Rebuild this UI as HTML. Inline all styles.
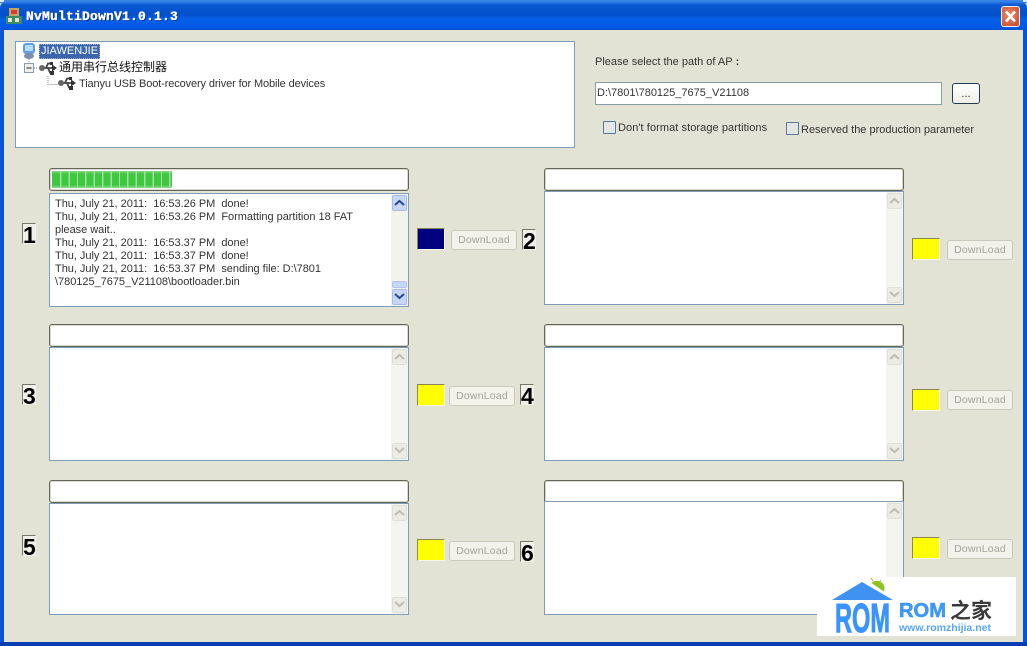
<!DOCTYPE html>
<html><head><meta charset="utf-8"><style>
html,body{margin:0;padding:0;background:#e3e3d5}
#r{position:relative;width:1027px;height:646px;overflow:hidden;background:#e3e3d5;font-family:"Liberation Sans","Noto Sans CJK SC",sans-serif;font-size:11px;color:#333}
#r div,#r span.a,#r svg{position:absolute;box-sizing:border-box}
.t{white-space:pre;line-height:13px}
.pg{background:#fff;border:1px solid #66655a;border-radius:3px;box-shadow:inset 0 0 0 1px #d8d8d0;height:23px;width:360px}
.bx{background:#fff;border:1px solid #7f9db9;width:360px}
.sb{right:0;top:0;bottom:0;width:17px;background:#f4f4f0}
.ar{left:1px;width:15px;height:16px;background:#ecebe5;border:1px solid #dfdfd8;border-radius:2px}
.n{border:1px solid #77776a;border-right-color:#f2f2e8;border-bottom-color:#f2f2e8;width:14px;height:21px;font:bold 23px/23px "Liberation Sans",sans-serif;color:#000;text-align:center;background:#f0f0e8}
.c{width:28px;height:22px;background:#ff0;border:1px solid #8a8a50;border-right-color:#f8f8e8;border-bottom-color:#f8f8e8}
.b{width:66px;height:20px;background:#f2f1ea;border:1px solid #cac9bc;border-radius:3px;color:#a5a497;text-align:center;font-size:10.5px;line-height:18px;letter-spacing:.2px}
.cb{width:13px;height:13px;background:#e4e6e6;border:1px solid #5a7a9a;border-radius:1px}
</style></head><body><div id="r">

<div style="left:0;top:0;width:1027px;height:3px;background:#3a85e8"></div>
<div style="left:0;top:0;width:4px;height:2px;background:#dfe8f4"></div>
<div style="left:1023px;top:0;width:4px;height:2px;background:#dfe8f4"></div>
<div style="left:0;top:1px;width:1027px;height:29px;border-radius:7px 7px 0 0;background:linear-gradient(#3a85e8 0,#2470e0 2px,#0a58d0 4px,#0350cc 14px,#0460e8 18px,#0358e4 27px,#0250d0 29px)"></div>
<div style="left:0;top:29px;width:4px;height:617px;background:#0a52d8"></div>
<div style="left:1023px;top:29px;width:4px;height:617px;background:#0a52d8"></div>
<div style="left:0;top:642px;width:1027px;height:4px;background:#083fb0"></div>
<div style="left:4px;top:30px;width:1019px;height:612px;background:#e3e3d5"></div>

<svg style="left:6px;top:8px" width="16" height="16" viewBox="0 0 16 16"><rect x="3" y="0" width="10" height="8" fill="#c9a35a"/><rect x="5" y="2" width="6" height="4" fill="#d0402a"/><rect x="0" y="8" width="16" height="8" fill="#3d8a68"/><rect x="2" y="10" width="4" height="4" fill="#e6e6d0"/><rect x="9" y="10" width="4" height="4" fill="#e6e6d0"/></svg>
<div class="t" style="left:26px;top:10px;font:bold 13px/14px 'Liberation Mono',monospace;color:#fff;-webkit-text-stroke:.35px #fff;text-shadow:1px 1px 0 #0a2f90;letter-spacing:.2px">NvMultiDownV1.0.1.3</div>
<div style="left:1001px;top:6px;width:19px;height:21px;border:1px solid #f0f0f0;border-radius:3px;background:radial-gradient(circle at 40% 40%,#e88a66,#c8452a)"></div>
<svg style="left:1001px;top:6px" width="19" height="21"><path d="M5 5.500L14 15.500M14 5.500L5 15.500" stroke="#fff" stroke-width="2.600"/></svg>

<div style="left:15px;top:41px;width:560px;height:107px;background:#fff;border:1px solid #7f9db9"></div>
<svg style="left:22px;top:43px" width="16" height="16" viewBox="0 0 16 16"><rect x="1" y="0" width="12" height="11" rx="3" fill="#5d9fe0"/><rect x="3" y="2" width="8" height="6" rx="1" fill="#b4dcf5"/><ellipse cx="7" cy="13" rx="5" ry="3" fill="#7d8ea8"/></svg>
<div class="t" style="left:39px;top:44px;width:61px;height:15px;background:#3a66ae;border:1px dotted #aac;color:#fff;line-height:13px;padding-left:1px;font-size:11px">JIAWENJIE</div>
<svg style="left:24px;top:59px" width="60" height="34"><path d="M5 0V4M10 9H14M24 17V25.500H34" stroke="#888" stroke-dasharray="1 1" fill="none"/><rect x="0.500" y="4.500" width="9" height="9" fill="#f0f0ea" stroke="#8a9ab0"/><path d="M2.500 9H7.500" stroke="#222"/></svg>
<svg style="left:39px;top:60px" width="18" height="16" viewBox="0 0 18 16"><path d="M2 8H15M7 8L9 3.500H11M9 8L11 12.500H12" stroke="#444" stroke-width="1.800" fill="none"/><path d="M13 4.500L18 8L13 11.500Z" fill="#333"/><circle cx="3" cy="8" r="3" fill="#666"/><rect x="11" y="2" width="3" height="3" fill="#333"/><rect x="11" y="11" width="4" height="4" fill="#333"/></svg>
<svg style="left:58px;top:75px" width="18" height="16" viewBox="0 0 18 16"><path d="M2 8H15M7 8L9 3.500H11M9 8L11 12.500H12" stroke="#444" stroke-width="1.800" fill="none"/><path d="M13 4.500L18 8L13 11.500Z" fill="#333"/><circle cx="3" cy="8" r="3" fill="#666"/><rect x="11" y="2" width="3" height="3" fill="#333"/><rect x="11" y="11" width="4" height="4" fill="#333"/></svg>
<div class="t" style="left:59px;top:60px;font-size:12px;color:#111;line-height:14px">通用串行总线控制器</div>
<div class="t" style="left:79px;top:78px;letter-spacing:-.12px">Tianyu USB Boot-recovery driver for Mobile devices</div>

<div class="t" style="left:595px;top:56px">Please select the path of AP<span style="font-weight:bold"> :</span></div>
<div class="t" style="left:595px;top:82px;width:347px;height:23px;background:#fff;border:1px solid #8a9da8;padding:4px 1px">D:\7801\780125_7675_V21108</div>
<div class="t" style="left:952px;top:83px;width:28px;height:21px;background:linear-gradient(#fff,#f0efe6);border:1px solid #1f3a5a;border-radius:3px;text-align:center;line-height:20px">...</div>
<div class="cb" style="left:603px;top:121px"></div>
<div class="t" style="left:618px;top:122px;letter-spacing:.07px">Don't format storage partitions</div>
<div class="cb" style="left:786px;top:122px"></div>
<div class="t" style="left:801px;top:124px">Reserved the production parameter</div>

<!-- panel 1 -->
<div class="pg" style="left:49px;top:168px"></div>
<div style="left:52px;top:171px;width:120px;height:17px;background:linear-gradient(#8ad88a,#3fc83f 3px,#3fc83f 14px,#8ad88a)"></div>
<div style="left:53px;top:171px;width:119px;height:17px;background:repeating-linear-gradient(90deg,transparent 0,transparent 7px,#9fdf9f 7px,#9fdf9f 8.400px)"></div>
<div class="bx" style="left:49px;top:193px;height:114px">
<div class="t" style="left:5px;top:4px;letter-spacing:-.03px">Thu, July 21, 2011:  16:53.26 PM  done!
Thu, July 21, 2011:  16:53.26 PM  Formatting partition 18 FAT
please wait..
Thu, July 21, 2011:  16:53.37 PM  done!
Thu, July 21, 2011:  16:53.37 PM  done!
Thu, July 21, 2011:  16:53.37 PM  sending file: D:\7801
\780125_7675_V21108\bootloader.bin</div>
<div class="sb" style="background:#f3f3ee"><div class="ar" style="top:1px;background:#c5d6f6;border-color:#a8bce8"></div><div class="ar" style="left:1px;top:87px;height:7px;background:#c5d6f6;border-color:#b0c4ec"></div><div class="ar" style="top:95px;background:#c5d6f6;border-color:#a8bce8"></div>
<svg style="left:3px;top:5px" width="11" height="8"><path d="M1 6L5.500 2L10 6" stroke="#2a4a90" stroke-width="2" fill="none"/></svg>
<svg style="left:3px;top:98px" width="11" height="8"><path d="M1 2L5.500 6L10 2" stroke="#2a4a90" stroke-width="2" fill="none"/></svg></div>
</div>
<div class="n" style="left:22px;top:223px">1</div>
<div class="c" style="left:417px;top:228px;background:#000080"></div>
<div class="b" style="left:451px;top:230px">DownLoad</div>

<!-- panel 2 -->
<div class="pg" style="left:544px;top:168px"></div>
<div class="bx" style="left:544px;top:191px;height:114px"><div class="sb"><div class="ar" style="top:1px"></div><div class="ar" style="top:95px"></div>
<svg style="left:3px;top:5px" width="11" height="8"><path d="M1 6L5.500 2L10 6" stroke="#bdbdb2" stroke-width="2" fill="none"/></svg>
<svg style="left:3px;top:98px" width="11" height="8"><path d="M1 2L5.500 6L10 2" stroke="#bdbdb2" stroke-width="2" fill="none"/></svg></div></div>
<div class="n" style="left:522px;top:229px">2</div>
<div class="c" style="left:912px;top:238px"></div>
<div class="b" style="left:947px;top:240px">DownLoad</div>

<!-- panel 3 -->
<div class="pg" style="left:49px;top:324px"></div>
<div class="bx" style="left:49px;top:347px;height:114px"><div class="sb"><div class="ar" style="top:1px"></div><div class="ar" style="top:95px"></div>
<svg style="left:3px;top:5px" width="11" height="8"><path d="M1 6L5.500 2L10 6" stroke="#bdbdb2" stroke-width="2" fill="none"/></svg>
<svg style="left:3px;top:98px" width="11" height="8"><path d="M1 2L5.500 6L10 2" stroke="#bdbdb2" stroke-width="2" fill="none"/></svg></div></div>
<div class="n" style="left:22px;top:384px">3</div>
<div class="c" style="left:417px;top:384px"></div>
<div class="b" style="left:449px;top:386px">DownLoad</div>

<!-- panel 4 -->
<div class="pg" style="left:544px;top:324px"></div>
<div class="bx" style="left:544px;top:347px;height:114px"><div class="sb"><div class="ar" style="top:1px"></div><div class="ar" style="top:95px"></div>
<svg style="left:3px;top:5px" width="11" height="8"><path d="M1 6L5.500 2L10 6" stroke="#bdbdb2" stroke-width="2" fill="none"/></svg>
<svg style="left:3px;top:98px" width="11" height="8"><path d="M1 2L5.500 6L10 2" stroke="#bdbdb2" stroke-width="2" fill="none"/></svg></div></div>
<div class="n" style="left:520px;top:384px">4</div>
<div class="c" style="left:912px;top:389px"></div>
<div class="b" style="left:947px;top:390px">DownLoad</div>

<!-- panel 5 -->
<div class="pg" style="left:49px;top:480px"></div>
<div class="bx" style="left:49px;top:503px;height:112px"><div class="sb"><div class="ar" style="top:1px"></div><div class="ar" style="top:93px"></div>
<svg style="left:3px;top:5px" width="11" height="8"><path d="M1 6L5.500 2L10 6" stroke="#bdbdb2" stroke-width="2" fill="none"/></svg>
<svg style="left:3px;top:96px" width="11" height="8"><path d="M1 2L5.500 6L10 2" stroke="#bdbdb2" stroke-width="2" fill="none"/></svg></div></div>
<div class="n" style="left:22px;top:535px">5</div>
<div class="c" style="left:417px;top:539px"></div>
<div class="b" style="left:449px;top:541px">DownLoad</div>

<!-- panel 6 -->
<div class="pg" style="left:544px;top:480px"></div>
<div class="bx" style="left:544px;top:501px;height:114px"><div class="sb"><div class="ar" style="top:1px"></div>
<svg style="left:3px;top:5px" width="11" height="8"><path d="M1 6L5.500 2L10 6" stroke="#bdbdb2" stroke-width="2" fill="none"/></svg></div></div>
<div class="n" style="left:520px;top:541px">6</div>
<div class="c" style="left:912px;top:537px"></div>
<div class="b" style="left:947px;top:539px">DownLoad</div>

<!-- logo -->
<div style="left:817px;top:577px;width:199px;height:59px;background:#fff"></div>
<svg style="left:817px;top:577px" width="199" height="59" viewBox="0 0 199 59">
<path d="M15 23L45 5L76 23Z" fill="#3f92f2"/>
<path d="M54 6A8 8 0 0 1 67 15Z" fill="#8fc31f" stroke="#fff" stroke-width=".6"/>
<path d="M56 4L54 1M62 6L64 3" stroke="#8fc31f"/>
<text x="18" y="55" font-family="Liberation Sans" font-weight="bold" font-size="41" fill="#3a94ff" stroke="#3a94ff" stroke-width="1" textLength="55" lengthAdjust="spacingAndGlyphs">ROM</text>
<text x="82" y="40" font-family="Liberation Sans" font-weight="bold" font-size="20" fill="#3f98f5" stroke="#3f98f5" stroke-width=".6" textLength="47" lengthAdjust="spacingAndGlyphs">ROM</text>
<text x="133" y="41" font-family="Noto Sans CJK SC" font-weight="bold" font-size="21" fill="#3a3a3a">之家</text>
<text x="82" y="54" font-family="Liberation Sans" font-weight="bold" font-size="10" fill="#5aa6f2" textLength="92" lengthAdjust="spacingAndGlyphs">www.romzhijia.net</text>
</svg>
</div></body></html>
